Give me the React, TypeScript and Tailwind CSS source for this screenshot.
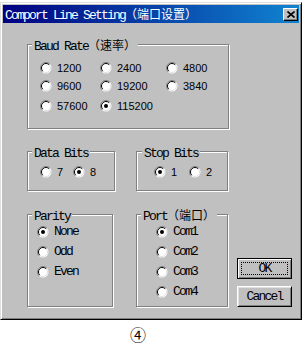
const mono = "font-['Liberation_Mono','Courier_New',monospace] text-[13px] tracking-[-1.8px]";
const cjk = "font-['Noto_Sans_CJK_SC',sans-serif] text-[12px] tracking-normal";
const sans = "font-['Liberation_Sans',Arial,sans-serif] text-[11px]";

function RadioDot({ checked }: { checked?: boolean }) {
  return (
    <svg width="12" height="12" viewBox="0 0 12 12" className="shrink-0">
      <circle cx="6" cy="6" r="5.5" fill="white" />
      <path d="M9.9 2.1 A5.5 5.5 0 0 0 2.1 9.9" fill="none" stroke="#808080" strokeWidth="1" />
      <path d="M9.2 2.8 A4.5 4.5 0 0 0 2.8 9.2" fill="none" stroke="#000" strokeWidth="1" />
      <path d="M9.2 2.8 A4.5 4.5 0 0 1 2.8 9.2" fill="none" stroke="#dfdfdf" strokeWidth="1" />
      {checked && <circle cx="6" cy="6" r="2" fill="#000" />}
    </svg>
  );
}

function Radio({ label, checked, font, className = "" }: { label: string; checked?: boolean; font: string; className?: string }) {
  return (
    <div className={`flex items-center gap-[5px] h-[16px] ${className}`}>
      <RadioDot checked={checked} />
      <span className={`${font} leading-[14px] text-black`}>{label}</span>
    </div>
  );
}

function Group({
  title,
  zh,
  className = "",
  legendClass = "ml-[4px]",
  children,
}: {
  title: string;
  zh?: string;
  className?: string;
  legendClass?: string;
  children: React.ReactNode;
}) {
  return (
    <fieldset
      className={`border border-[#808080] shadow-[inset_1px_1px_0_white,1px_1px_0_white] ${className}`}
    >
      <legend className={`${legendClass} px-[2px] h-[13px] leading-[13px] bg-[#c0c0c0] text-black whitespace-nowrap`}>
        <span className={mono}>{title}</span>
        {zh && <span className={cjk}>{zh}</span>}
      </legend>
      {children}
    </fieldset>
  );
}

export default function App() {
  return (
    <div className="w-[305px] h-[347px] bg-white overflow-hidden">
      {/* dialog window */}
      <div className="mt-[2px] w-[302px] h-[318px] bg-[#c0c0c0] border border-t-[#dfdfdf] border-l-[#dfdfdf] border-r-black border-b-black shadow-[inset_1px_1px_0_white,inset_-1px_-1px_0_#808080] p-[2px]">
        {/* title bar */}
        <div className="h-[18px] flex items-center justify-between bg-[linear-gradient(90deg,#000080,#1084d0)] pl-[2px] pr-[1px]">
          <div className="text-white whitespace-nowrap leading-[16px]">
            <span className={mono}>Comport Line Setting</span>
            <span className={cjk}>（端口设置）</span>
          </div>
          <div className="w-[15px] h-[13px] bg-[#c0c0c0] border border-t-white border-l-white border-r-black border-b-black shadow-[inset_-1px_-1px_0_#808080] flex items-center justify-center">
            <svg width="8" height="7" viewBox="0 0 8 7">
              <path d="M0.5 0.5 L7.5 6.5 M7.5 0.5 L0.5 6.5" stroke="#000" strokeWidth="1.6" />
            </svg>
          </div>
        </div>

        {/* body */}
        <div className="pl-[24px] pt-[15px]">
          <Group title="Baud Rate" zh="（速率）" className="w-[202px] h-[91px]">
            <div className="pl-[12px] pt-[9px] flex flex-col">
              <div className="flex">
                <Radio label="1200" font={sans} className="w-[60px]" />
                <Radio label="2400" font={sans} className="w-[66px]" />
                <Radio label="4800" font={sans} />
              </div>
              <div className="flex mt-[2px]">
                <Radio label="9600" font={sans} className="w-[60px]" />
                <Radio label="19200" font={sans} className="w-[66px]" />
                <Radio label="3840" font={sans} />
              </div>
              <div className="flex mt-[4px]">
                <Radio label="57600" font={sans} className="w-[60px]" />
                <Radio label="115200" font={sans} checked className="w-[66px]" />
              </div>
            </div>
          </Group>

          <div className="flex gap-[21px] mt-[16px]">
            <Group title="Data Bits" className="w-[88px] h-[46px]">
              <div className="pl-[12px] pt-[6px] flex">
                <Radio label="7" font={sans} className="w-[33px]" />
                <Radio label="8" font={sans} checked />
              </div>
            </Group>
            <Group title="Stop Bits" legendClass="ml-[5px]" className="w-[92px] h-[46px]">
              <div className="pl-[17px] pt-[6px] flex">
                <Radio label="1" font={sans} checked className="w-[35px]" />
                <Radio label="2" font={sans} />
              </div>
            </Group>
          </div>

          <div className="flex mt-[17px]">
            <Group title="Parity" className="w-[86px] h-[99px]">
              <div className="pl-[9px] pt-[3px] flex flex-col gap-[4px]">
                <Radio label="None" font={mono} checked />
                <Radio label="Odd" font={mono} />
                <Radio label="Even" font={mono} />
              </div>
            </Group>
            <Group title="Port" zh="（端口）" legendClass="ml-[4px]" className="ml-[23px] w-[92px] h-[99px]">
              <div className="pl-[19px] pt-[3px] flex flex-col gap-[4px]">
                <Radio label="Com1" font={mono} checked />
                <Radio label="Com2" font={mono} />
                <Radio label="Com3" font={mono} />
                <Radio label="Com4" font={mono} />
              </div>
            </Group>

            <div className="ml-[9px] flex flex-col justify-end gap-[7px]">
              <button className="w-[55px] h-[21px] bg-[#c0c0c0] border border-black shadow-[inset_1px_1px_0_white,inset_-1px_-1px_0_#808080] p-[3px] flex">
                <span className={`flex-1 border border-dotted border-black flex items-center justify-center leading-[12px] text-black ${mono}`}>
                  OK
                </span>
              </button>
              <button className={`w-[55px] h-[21px] bg-[#c0c0c0] border border-t-white border-l-white border-r-black border-b-black shadow-[inset_1px_1px_0_#dfdfdf,inset_-1px_-1px_0_#808080] flex items-center justify-center leading-[12px] text-black ${mono}`}>
                Cancel
              </button>
            </div>
          </div>
        </div>
      </div>

      {/* caption */}
      <div className="w-[276px] h-[27px] flex items-center justify-center text-black font-['Noto_Sans_CJK_SC',sans-serif] text-[16px] leading-[16px]">
        ④
      </div>
    </div>
  );
}
